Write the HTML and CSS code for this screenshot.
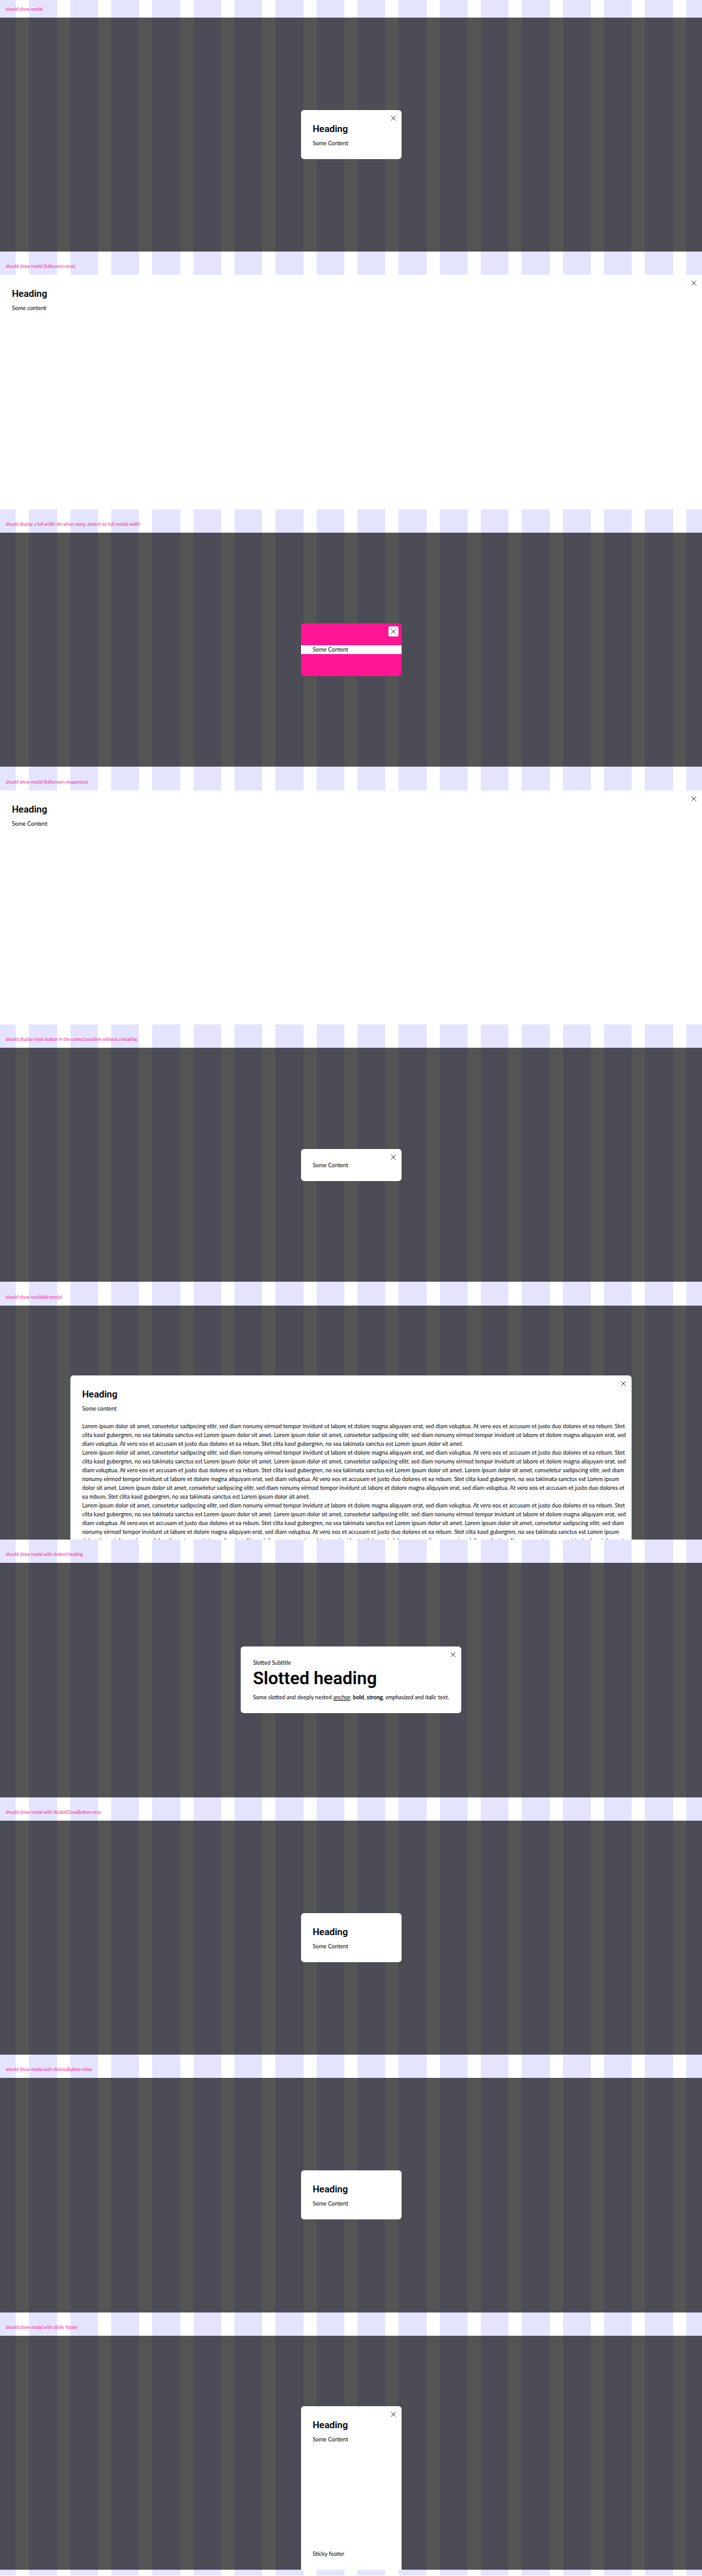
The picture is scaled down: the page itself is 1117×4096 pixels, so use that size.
FILE: index.html
```html
<!DOCTYPE html>
<html lang="en">
<head>
<meta charset="utf-8">
<meta name="viewport" content="width=device-width, initial-scale=1">
<title>Modal</title>
<link rel="stylesheet" href="styles.css">
</head>
<body>
<main class="page">
  <section class="case">
    <p class="label">should show modal</p>
    <div class="stage">
      <div class="modal" role="dialog" aria-label="Heading">
        <button class="close" type="button" aria-label="Close"><svg viewBox="0 0 14 14" aria-hidden="true"><path d="M0.5 0.5l13 13M13.500 0.500l-13 13"/></svg></button>
        <h2 class="heading">Heading</h2>
        <p class="text">Some Content</p>
      </div>
    </div>
  </section>

  <section class="case">
    <p class="label">should show modal (fullscreen=true)</p>
    <div class="stage">
      <div class="modal modal-fullscreen" role="dialog" aria-label="Heading">
        <button class="close" type="button" aria-label="Close"><svg viewBox="0 0 14 14" aria-hidden="true"><path d="M0.5 0.5l13 13M13.500 0.500l-13 13"/></svg></button>
        <h2 class="heading">Heading</h2>
        <p class="text">Some content</p>
      </div>
    </div>
  </section>

  <section class="case">
    <p class="label">should display a full width div when using .stretch-to-full-modal-width</p>
    <div class="stage">
      <div class="modal modal-pink" role="dialog" aria-label="Full width content">
        <button class="close" type="button" aria-label="Close"><svg viewBox="0 0 14 14" aria-hidden="true"><path d="M0.5 0.5l13 13M13.500 0.500l-13 13"/></svg></button>
        <p class="text text-stretch">Some Content</p>
      </div>
    </div>
  </section>

  <section class="case">
    <p class="label">should show modal (fullscreen=responsive)</p>
    <div class="stage">
      <div class="modal modal-fullscreen" role="dialog" aria-label="Heading">
        <button class="close" type="button" aria-label="Close"><svg viewBox="0 0 14 14" aria-hidden="true"><path d="M0.5 0.5l13 13M13.500 0.500l-13 13"/></svg></button>
        <h2 class="heading">Heading</h2>
        <p class="text">Some Content</p>
      </div>
    </div>
  </section>

  <section class="case">
    <p class="label">should display close button in the correct position without a heading</p>
    <div class="stage">
      <div class="modal" role="dialog" aria-label="Content">
        <button class="close" type="button" aria-label="Close"><svg viewBox="0 0 14 14" aria-hidden="true"><path d="M0.5 0.5l13 13M13.500 0.500l-13 13"/></svg></button>
        <p class="text">Some Content</p>
      </div>
    </div>
  </section>

  <section class="case">
    <p class="label">should show scrollable modal</p>
    <div class="stage stage-top">
      <div class="modal modal-wide" role="dialog" aria-label="Heading">
        <button class="close" type="button" aria-label="Close"><svg viewBox="0 0 14 14" aria-hidden="true"><path d="M0.5 0.5l13 13M13.500 0.500l-13 13"/></svg></button>
        <h2 class="heading">Heading</h2>
        <p class="text">Some content</p>
        <div class="text long">
          <p>Lorem ipsum dolor sit amet, consetetur sadipscing elitr, sed diam nonumy eirmod tempor invidunt ut labore et dolore magna aliquyam erat, sed diam voluptua. At vero eos et accusam et justo duo dolores et ea rebum. Stet<br>
          clita kasd gubergren, no sea takimata sanctus est Lorem ipsum dolor sit amet. Lorem ipsum dolor sit amet, consetetur sadipscing elitr, sed diam nonumy eirmod tempor invidunt ut labore et dolore magna aliquyam erat, sed<br>
          diam voluptua. At vero eos et accusam et justo duo dolores et ea rebum. Stet clita kasd gubergren, no sea takimata sanctus est Lorem ipsum dolor sit amet.</p>
          <p>Lorem ipsum dolor sit amet, consetetur sadipscing elitr, sed diam nonumy eirmod tempor invidunt ut labore et dolore magna aliquyam erat, sed diam voluptua. At vero eos et accusam et justo duo dolores et ea rebum. Stet<br>
          clita kasd gubergren, no sea takimata sanctus est Lorem ipsum dolor sit amet. Lorem ipsum dolor sit amet, consetetur sadipscing elitr, sed diam nonumy eirmod tempor invidunt ut labore et dolore magna aliquyam erat, sed<br>
          diam voluptua. At vero eos et accusam et justo duo dolores et ea rebum. Stet clita kasd gubergren, no sea takimata sanctus est Lorem ipsum dolor sit amet. Lorem ipsum dolor sit amet, consetetur sadipscing elitr, sed diam<br>
          nonumy eirmod tempor invidunt ut labore et dolore magna aliquyam erat, sed diam voluptua. At vero eos et accusam et justo duo dolores et ea rebum. Stet clita kasd gubergren, no sea takimata sanctus est Lorem ipsum<br>
          dolor sit amet. Lorem ipsum dolor sit amet, consetetur sadipscing elitr, sed diam nonumy eirmod tempor invidunt ut labore et dolore magna aliquyam erat, sed diam voluptua. At vero eos et accusam et justo duo dolores et<br>
          ea rebum. Stet clita kasd gubergren, no sea takimata sanctus est Lorem ipsum dolor sit amet.</p>
          <p>Lorem ipsum dolor sit amet, consetetur sadipscing elitr, sed diam nonumy eirmod tempor invidunt ut labore et dolore magna aliquyam erat, sed diam voluptua. At vero eos et accusam et justo duo dolores et ea rebum. Stet<br>
          clita kasd gubergren, no sea takimata sanctus est Lorem ipsum dolor sit amet. Lorem ipsum dolor sit amet, consetetur sadipscing elitr, sed diam nonumy eirmod tempor invidunt ut labore et dolore magna aliquyam erat, sed<br>
          diam voluptua. At vero eos et accusam et justo duo dolores et ea rebum. Stet clita kasd gubergren, no sea takimata sanctus est Lorem ipsum dolor sit amet. Lorem ipsum dolor sit amet, consetetur sadipscing elitr, sed diam<br>
          nonumy eirmod tempor invidunt ut labore et dolore magna aliquyam erat, sed diam voluptua. At vero eos et accusam et justo duo dolores et ea rebum. Stet clita kasd gubergren, no sea takimata sanctus est Lorem ipsum<br>
          dolor sit amet. Lorem ipsum dolor sit amet, consetetur sadipscing elitr, sed diam nonumy eirmod tempor invidunt ut labore et dolore magna aliquyam erat, sed diam voluptua. At vero eos et accusam et justo duo dolores et</p>
        </div>
      </div>
    </div>
  </section>

  <section class="case">
    <p class="label">should show modal with slotted heading</p>
    <div class="stage">
      <div class="modal" role="dialog" aria-label="Slotted heading">
        <button class="close" type="button" aria-label="Close"><svg viewBox="0 0 14 14" aria-hidden="true"><path d="M0.5 0.5l13 13M13.500 0.500l-13 13"/></svg></button>
        <p class="text">Slotted Subtitle</p>
        <h2 class="heading heading-large">Slotted heading</h2>
        <p class="text">Some slotted and deeply nested <a href="#">anchor</a>, <b>bold</b>, <strong>strong</strong>, <em>emphasized</em> and <i>italic</i> text.</p>
      </div>
    </div>
  </section>

  <section class="case">
    <p class="label">should show modal with disableCloseButton=true</p>
    <div class="stage">
      <div class="modal" role="dialog" aria-label="Heading">
        <h2 class="heading">Heading</h2>
        <p class="text">Some Content</p>
      </div>
    </div>
  </section>

  <section class="case">
    <p class="label">should show modal with dismissButton=false</p>
    <div class="stage">
      <div class="modal" role="dialog" aria-label="Heading">
        <h2 class="heading">Heading</h2>
        <p class="text">Some Content</p>
      </div>
    </div>
  </section>

  <section class="case">
    <p class="label">should show modal with sticky footer</p>
    <div class="stage stage-top">
      <div class="modal modal-tall" role="dialog" aria-label="Heading">
        <button class="close" type="button" aria-label="Close"><svg viewBox="0 0 14 14" aria-hidden="true"><path d="M0.5 0.5l13 13M13.500 0.500l-13 13"/></svg></button>
        <h2 class="heading">Heading</h2>
        <p class="text">Some Content</p>
        <footer class="text footer">Sticky footer</footer>
      </div>
    </div>
  </section>
</main>
</body>
</html>
```
FILE: styles.css
```css
:root {
  --ink: #010205;
  --pink: #ff1493;
  --column: #e4e4ff;
}

* { box-sizing: border-box; }

body, h2, p { margin: 0; }

body {
  color: var(--ink);
  font: 9px/14px Lato, sans-serif;
}

/* 14-column grid between 10% margins, repeated out to both edges */
.page {
  overflow: hidden;
  padding-bottom: calc(100vw / 120);
  background: repeating-linear-gradient(
    90deg,
    var(--column) -1.6964% 2.2768%,
    #fff 2.2768% 4.1518%
  );
}

.case {
  display: flex;
  flex-direction: column;
}

.label {
  display: flex;
  align-items: flex-end;
  height: calc(100vw / 30);
  padding: 0 9px 7px;
  color: var(--pink);
  font-size: 7px;
  white-space: nowrap;
}

.case:first-child .label { height: calc(100vw / 40); }

.stage {
  display: flex;
  align-items: center;
  justify-content: center;
  height: calc(100vw / 3);
  overflow: hidden;
  background: rgba(0, 1, 1, 0.67);
}

.stage-top {
  align-items: flex-start;
  padding-top: 10vw;
}

.modal {
  position: relative;
  min-width: 160px;
  padding: 19px 19px 18px;
  border-radius: 5px;
  background: #fff;
}

.modal-fullscreen {
  align-self: stretch;
  width: 100%;
  border-radius: 0;
}

.modal-pink {
  padding: 35px 0;
  background: var(--pink);
}

.modal-wide { width: 80%; }

.modal-tall {
  display: flex;
  flex-direction: column;
  align-self: stretch;
  border-radius: 5px 5px 0 0;
}

.close {
  position: absolute;
  top: 5px;
  right: 5px;
  display: flex;
  align-items: center;
  justify-content: center;
  width: 16px;
  height: 16px;
  padding: 0;
  border: 0;
  border-radius: 2px;
  background: #fff;
}

.close svg {
  width: 8px;
  height: 8px;
  fill: none;
  stroke: var(--ink);
  stroke-width: 1.4;
}

.heading {
  margin-bottom: 5px;
  font: 600 15px/22px Roboto, sans-serif;
}

.heading-large {
  font-size: 28px;
  line-height: 36px;
}

.text a { color: inherit; }

.text-stretch {
  padding: 0 19px;
  background: #fff;
}

.long {
  margin-top: 14px;
  white-space: nowrap;
}

.footer { margin-top: auto; }
```
